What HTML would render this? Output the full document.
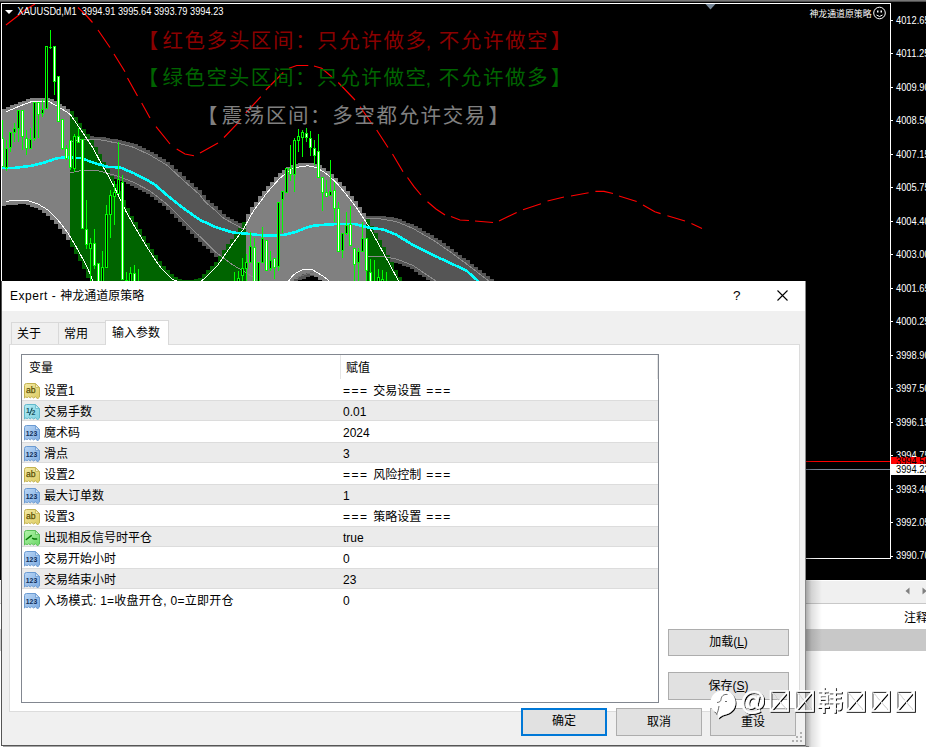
<!DOCTYPE html>
<html lang="zh-CN"><head><meta charset="utf-8"><title>Expert - 神龙通道原策略</title>
<style>
html,body{margin:0;padding:0}
body{width:926px;height:747px;position:relative;overflow:hidden;background:#fff;font-family:"Liberation Sans","Noto Sans CJK SC",sans-serif;font-size:12px;color:#000}
#chart{position:absolute;left:0;top:0;width:926px;height:580px;background:#000}
#chart svg{position:absolute;left:0;top:0}
.big{font-family:"Liberation Sans","Noto Sans CJK SC",sans-serif;font-weight:400}
#topstrip{position:absolute;left:0;top:0;width:926px;height:2px;background:linear-gradient(#8a8a8a,#3a3a3a)}
#below{position:absolute;left:0;top:580px;width:926px;height:167px;background:#fff}
#sb{position:absolute;left:0;top:1px;width:926px;height:22px;background:#f0f0f0;border-bottom:1px solid #c8c8c8}
#band{position:absolute;left:0;top:49px;width:926px;height:22px;background:#c8c8c8}
#dlgshadow{position:absolute;left:806px;top:287px;width:16px;height:460px;background:linear-gradient(90deg,rgba(0,0,0,.32),rgba(0,0,0,.12) 35%,rgba(0,0,0,0))}
#dlg{position:absolute;left:1px;top:281px;width:805px;height:465px;background:#f0f0f0;box-sizing:border-box;border-left:1px solid #555;border-bottom:1px solid #555;border-right:1px solid #8a8a8a}
#tbar{position:absolute;left:0;top:0;width:803px;height:30px;background:#fff}
#ttl{position:absolute;left:8px;top:7px;font-size:12px;line-height:16px;color:#000;white-space:nowrap}
.tab{position:absolute;box-sizing:border-box;border:1px solid #d9d9d9;border-bottom:none;background:#f0f0f0;text-align:left;padding-left:5px;line-height:20px;font-size:12px}
#pane{position:absolute;left:7px;top:63px;width:791px;height:368px;box-sizing:border-box;background:#fff;border:1px solid #dcdcdc}
#list{position:absolute;left:19px;top:73px;width:638px;height:349px;box-sizing:border-box;border:1px solid #828790;background:#fff;overflow:hidden}
#hdr{height:23px;position:relative;border-bottom:1px solid #fff}
#hdr span{position:absolute;top:5px;line-height:16px}
.row{height:21px;position:relative;box-sizing:border-box;border-top:1px solid #fff;border-bottom:1px solid #fff}
.row.alt{background:#ebebeb;border-top:1px solid #dcdcdc;border-bottom:1px solid #dcdcdc}
.row .ic{position:absolute;left:2px;top:3px}
.eq{letter-spacing:1.5px}
.ls{letter-spacing:.25px}
.row .nm{position:absolute;left:22px;top:3px;line-height:17px;white-space:nowrap}
.row .vl{position:absolute;left:321px;top:3px;line-height:17px;white-space:nowrap}
.btn{position:absolute;box-sizing:border-box;border:1px solid #adadad;background:#e1e1e1;text-align:center;font-size:12px}
#wm{position:absolute;left:0;top:0;width:926px;height:747px;pointer-events:none}
</style></head><body>
<div id="chart">
<svg width="926" height="580" viewBox="0 0 926 580">
<g shape-rendering="crispEdges">
<path fill="#555555" d="M66 140h4V177h-4zM70 138h4V176h-4zM74 137h4V175h-4zM78 136h4V174h-4zM82 136h4V173h-4zM86 136h4V173h-4zM90 136h4V174h-4zM94 137h4V174h-4zM98 137h4V175h-4zM102 137h4V176h-4zM106 138h4V177h-4zM110 139h4V178h-4zM114 139h4V179h-4zM118 140h4V181h-4zM122 141h4V182h-4zM126 142h4V184h-4zM130 143h4V186h-4zM134 144h4V188h-4zM138 146h4V190h-4zM142 148h4V192h-4zM146 150h4V194h-4zM150 152h4V197h-4zM154 154h4V200h-4zM158 157h4V203h-4zM162 159h4V206h-4zM166 162h4V210h-4zM170 165h4V214h-4zM174 169h4V218h-4zM178 172h4V222h-4zM182 176h4V226h-4zM186 180h4V230h-4zM190 183h4V234h-4zM194 187h4V238h-4zM198 190h4V242h-4zM202 195h4V246h-4zM206 200h4V249h-4zM210 203h4V253h-4zM214 206h4V257h-4zM218 210h4V260h-4zM222 214h4V263h-4zM226 217h4V266h-4zM230 219h4V269h-4zM234 221h4V271h-4zM238 223h4V273h-4zM242 225h4V276h-4zM246 225h4V278h-4zM250 224h4V281h-4zM254 223h4V283h-4zM258 222h4V285h-4zM262 221h4V286h-4zM266 220h4V286h-4zM270 219h4V286h-4zM274 218h4V286h-4zM278 217h4V286h-4zM282 216h4V285h-4zM286 215h4V284h-4zM290 214h4V283h-4zM294 213h4V282h-4zM298 212h4V280h-4zM302 212h4V279h-4zM306 211h4V277h-4zM310 211h4V276h-4zM314 211h4V275h-4zM318 210h4V273h-4zM322 210h4V272h-4zM326 210h4V270h-4zM330 209h4V269h-4zM334 209h4V267h-4zM338 209h4V266h-4zM342 210h4V265h-4zM346 211h4V264h-4zM350 212h4V263h-4zM354 213h4V262h-4zM358 214h4V261h-4zM362 215h4V260h-4zM366 216h4V259h-4zM370 216h4V259h-4zM374 216h4V259h-4zM378 216h4V260h-4zM382 216h4V260h-4zM386 217h4V261h-4zM390 217h4V262h-4zM394 218h4V263h-4zM398 219h4V264h-4zM402 221h4V266h-4zM406 223h4V267h-4zM410 224h4V269h-4zM414 226h4V272h-4zM418 228h4V275h-4zM422 231h4V277h-4zM426 233h4V280h-4zM430 235h4V283h-4zM434 238h4V286h-4zM438 240h4V289h-4zM442 243h4V292h-4zM446 246h4V296h-4zM450 249h4V299h-4zM454 252h4V303h-4zM458 255h4V306h-4zM462 258h4V310h-4zM466 260h4V313h-4zM470 264h4V313h-4zM474 267h4V313h-4zM478 270h4V313h-4zM482 273h4V313h-4zM486 276h4V313h-4zM490 279h4V313h-4zM494 282h4V313h-4z"/>
<path fill="#808080" d="M2 109h4V206h-4zM6 107h4V205h-4zM10 105h4V205h-4zM14 104h4V205h-4zM18 102h4V204h-4zM22 101h4V204h-4zM26 99h4V205h-4zM30 98h4V207h-4zM34 98h4V208h-4zM38 98h4V210h-4zM42 98h4V213h-4zM46 98h4V216h-4zM50 99h4V220h-4zM54 101h4V224h-4zM58 104h4V229h-4zM62 106h4V234h-4zM66 109h4V240h-4z"/>
<path fill="#006400" d="M70 111h4V247h-4zM74 117h4V254h-4zM78 123h4V261h-4zM82 129h4V269h-4zM86 134h4V278h-4zM90 140h4V287h-4zM94 147h4V296h-4zM98 154h4V302h-4zM102 162h4V310h-4zM106 169h4V316h-4zM110 176h4V324h-4zM114 184h4V330h-4zM118 191h4V336h-4zM122 200h4V339h-4zM126 208h4V343h-4zM130 216h4V346h-4zM134 222h4V350h-4zM138 229h4V353h-4zM142 236h4V357h-4zM146 243h4V360h-4zM150 249h4V364h-4zM154 255h4V367h-4zM158 261h4V371h-4zM162 266h4V374h-4zM166 270h4V378h-4zM170 274h4V381h-4zM174 277h4V385h-4zM178 279h4V388h-4zM182 280h4V392h-4zM186 280h4V395h-4zM190 280h4V399h-4zM194 279h4V402h-4zM198 278h4V403h-4zM202 274h4V402h-4zM206 270h4V398h-4zM210 266h4V394h-4zM214 262h4V390h-4zM218 256h4V386h-4zM222 250h4V382h-4zM226 244h4V378h-4zM230 239h4V374h-4zM234 234h4V370h-4zM238 228h4V366h-4zM242 222h4V362h-4z"/>
<path fill="#808080" d="M246 214h4V358h-4zM250 207h4V354h-4zM254 202h4V350h-4zM258 196h4V346h-4zM262 191h4V342h-4zM266 186h4V338h-4zM270 182h4V333h-4zM274 177h4V323h-4zM278 173h4V312h-4zM282 170h4V300h-4zM286 167h4V290h-4zM290 165h4V283h-4zM294 164h4V279h-4zM298 163h4V276h-4zM302 163h4V274h-4zM306 163h4V273h-4zM310 163h4V275h-4zM314 164h4V277h-4zM318 165h4V280h-4zM322 168h4V282h-4zM326 171h4V287h-4zM330 174h4V294h-4zM334 178h4V302h-4zM338 182h4V309h-4zM342 186h4V317h-4zM346 191h4V325h-4zM350 196h4V332h-4zM354 201h4V340h-4zM358 207h4V346h-4zM362 213h4V350h-4z"/>
<path fill="#006400" d="M366 219h4V354h-4zM370 226h4V358h-4zM374 233h4V362h-4zM378 240h4V366h-4zM382 247h4V370h-4zM386 255h4V374h-4zM390 262h4V378h-4zM394 270h4V382h-4zM398 277h4V386h-4zM402 285h4V390h-4zM406 292h4V394h-4z"/>
<polyline fill="none" stroke="#8c8c8c" stroke-width="1" points="70,142.5 72,142.0 74,141.4 76,140.9 78,140.3 80,139.8 82,139.3 84,139.0 86,139.1 88,139.2 90,139.3 92,139.4 94,139.5 96,139.6 98,139.7 100,139.8 102,140.2 104,140.6 106,140.9 108,141.3 110,141.7 112,142.1 114,142.5 116,142.9 118,143.3 120,143.8 122,144.3 124,144.8 126,145.3 128,145.8 130,146.3 132,146.8 134,147.5 136,148.4 138,149.4 140,150.3 142,151.2 144,152.2 146,153.1 148,154.1 150,155.0 152,156.2 154,157.4 156,158.6 158,159.8 160,161.0 162,162.2 164,163.4 166,164.6 168,166.2 170,168.0 172,169.9 174,171.7 176,173.6 178,175.4 180,177.2 182,179.1 184,180.9 186,182.6 188,184.4 190,186.2 192,187.9 194,189.7 196,191.5 198,193.2 200,195.2 202,197.7 204,200.4 206,202.6 208,204.3 210,206.0 212,207.7 214,209.4 216,211.1 218,213.0 220,215.0 222,217.0 224,218.5 226,219.6 228,220.8 230,221.8 232,222.9 234,224.1 236,225.1 238,226.2 240,227.3 242,228.4 244,228.8 246,228.5" />
<polyline fill="none" stroke="#8c8c8c" stroke-width="1" points="70,173.0 72,172.5 74,172.1 76,171.6 78,171.2 80,170.7 82,170.2 84,170.1 86,170.2 88,170.3 90,170.4 92,170.5 94,170.6 96,170.8 98,170.9 100,171.1 102,171.6 104,172.2 106,172.8 108,173.4 110,173.9 112,174.5 114,175.1 116,175.7 118,176.4 120,177.1 122,177.9 124,178.6 126,179.4 128,180.1 130,180.9 132,181.6 134,182.5 136,183.6 138,184.6 140,185.7 142,186.8 144,187.8 146,188.9 148,189.9 150,191.1 152,192.6 154,194.1 156,195.7 158,197.2 160,198.8 162,200.3 164,201.9 166,203.5 168,205.3 170,207.2 172,209.2 174,211.2 176,213.1 178,215.1 180,217.1 182,219.0 184,221.0 186,222.9 188,224.9 190,226.9 192,228.8 194,230.8 196,232.8 198,234.7 200,236.7 202,238.7 204,240.6 206,242.6 208,244.5 210,246.5 212,248.4 214,250.4 216,252.3 218,254.0 220,255.4 222,256.9 224,258.4 226,259.8 228,261.3 230,262.8 232,264.3 234,265.6 236,266.8 238,268.0 240,269.2 242,270.4 244,271.6 246,272.8 248,274.1 250,275.3 252,276.5 254,277.8 256,278.9 258,279.9 260,280.8 262,281.7" />
<polyline fill="none" stroke="#8c8c8c" stroke-width="1" points="366,218.9 368,219.0 370,218.9 372,218.9 374,218.8 376,218.8 378,218.7 380,218.8 382,219.1 384,219.4 386,219.8 388,220.1 390,220.5 392,220.9 394,221.2 396,221.6 398,222.2 400,223.1 402,223.9 404,224.7 406,225.6 408,226.4 410,227.2 412,228.1 414,229.1 416,230.2 418,231.4 420,232.5 422,233.7 424,234.8 426,236.0 428,237.1 430,238.3 432,239.4 434,240.7 436,242.1 438,243.4 440,244.8 442,246.2 444,247.6 446,248.9 448,250.3 450,251.7 452,253.2 454,254.6 456,256.1 458,257.6 460,259.1 462,260.5 464,262.0 466,263.5 468,265.0 470,266.6 472,268.1 474,269.7 476,271.2 478,272.8 480,274.4 482,275.9 484,277.4 486,278.8 488,280.3 490,281.8 492,283.5 494,285.2 496,286.8 498,288.4 500,290.0" />
<polyline fill="none" stroke="#8c8c8c" stroke-width="1" points="366,256.1 368,256.1 370,256.2 372,256.2 374,256.3 376,256.4 378,256.5 380,256.6 382,256.7 384,256.9 386,257.2 388,257.5 390,257.9 392,258.2 394,258.5 396,258.9 398,259.5 400,260.3 402,261.1 404,261.9 406,262.7 408,263.5 410,264.3 412,265.1 414,266.2 416,267.5 418,268.9 420,270.2 422,271.6 424,272.9 426,274.3 428,275.6 430,277.0 432,278.3 434,279.7 436,281.1 438,282.7 440,284.3 442,286.0 444,287.7 446,289.4 448,291.1 450,292.9" />
<polyline fill="none" stroke="#707070" stroke-width="1" points="296,277.9 298,277.2 300,276.5 302,275.8 304,275.1 306,274.4 308,273.7 310,273.0 312,272.3 314,271.6" />
<polyline fill="none" stroke="#ffffff" stroke-width="1" points="6,111.7 8,110.9 10,110.1 12,109.3 14,108.4 16,107.6 18,106.8 20,106.0 22,105.2 24,104.5 26,103.7 28,102.9 30,102.2 32,101.4 34,101.0 36,101.0 38,101.0 40,101.0 42,101.0 44,101.0 46,101.0 48,101.2 50,102.1 52,103.3 54,104.4 56,105.6 58,106.7 60,107.9 62,109.1 64,110.3 66,111.6 68,112.8 70,114.3 72,116.9 74,119.8 76,122.8 78,125.7 80,128.6 82,131.5 84,134.5 86,137.5 88,140.5 90,143.5 92,146.5 94,149.9 96,153.7 98,157.5 100,161.3 102,165.1 104,168.6 106,171.8 108,175.1 110,178.8 112,182.7 114,186.5 116,190.4 118,194.5 120,198.7 122,203.0 124,207.2 126,211.5 128,215.2 130,218.6 132,222.0 134,225.4 136,228.8 138,232.2 140,235.5 142,238.9 144,242.2 146,245.5 148,248.7 150,251.8 152,254.9 154,258.0 156,260.9 158,263.8 160,266.6 162,268.8 164,270.9 166,273.0 168,275.1 170,277.2 172,279.0 174,280.0 176,280.8 178,281.7 180,282.4 182,282.8 184,283.1 186,283.4 188,283.4 190,283.3 192,283.2 194,283.1 196,282.7 198,282.1 200,281.5 202,280.6 204,278.8 206,276.9 208,275.0 210,273.1 212,271.2 214,269.3 216,267.3 218,264.8 220,261.9 222,259.0 224,256.1 226,253.2 228,250.3 230,247.4 232,244.5 234,241.7 236,239.1 238,236.5 240,233.9 242,231.3 244,228.2 246,224.5 248,220.8 250,217.2 252,213.5 254,210.3 256,207.6 258,204.9 260,202.1 262,199.4 264,196.7 266,194.0 268,191.5 270,189.3 272,187.0 274,184.8 276,182.5 278,180.3 280,178.1 282,176.5 284,174.9 286,173.4 288,171.8 290,170.3 292,169.0 294,168.4 296,167.8 298,167.3 300,166.8 302,166.5 304,166.2 306,166.0 308,165.9 310,166.2 312,166.6 314,167.0 316,167.4 318,168.3 320,169.6 322,170.9 324,172.2 326,173.6 328,175.2 330,177.0 332,178.8 334,180.6 336,182.4 338,184.6 340,187.0 342,189.4 344,191.8 346,194.2 348,196.7 350,199.3 352,201.9 354,204.5 356,207.1 358,209.9 360,212.9 362,215.9 364,218.9 366,222.0 368,225.3 370,228.8 372,232.3 374,235.8 376,239.4 378,243.1 380,246.7 382,250.4 384,254.0 386,257.7 388,261.3 390,265.0 392,268.8 394,272.5 396,276.2 398,280.0 400,284.0 402,287.9 404,291.6 406,295.1 408,298.7 410,302.2" />
<polyline fill="none" stroke="#ffffff" stroke-width="1" points="6,201.3 8,201.1 10,200.9 12,200.8 14,200.6 16,200.4 18,200.3 20,200.4 22,200.4 24,200.4 26,200.5 28,200.6 30,201.2 32,201.9 34,202.6 36,203.3 38,204.1 40,205.2 42,206.4 44,207.6 46,208.8 48,210.1 50,212.0 52,214.0 54,216.0 56,218.0 58,220.1 60,222.6 62,225.2 64,227.8 66,230.4 68,233.1 70,236.4 72,239.8 74,243.2 76,246.6 78,250.1 80,253.7 82,257.4 84,261.1 86,264.8 88,269.1 90,273.9 92,278.6 94,283.3 96,287.8" />
<polyline fill="none" stroke="#ffffff" stroke-width="1" points="286,286.1 288,282.3 290,278.9 292,276.7 294,274.7 296,273.2 298,272.1 300,271.0 302,270.0 304,269.4 306,269.1 308,269.1 310,269.1 312,269.6 314,270.7 316,271.8 318,273.0 320,274.3 322,275.5 324,276.8 326,278.3 328,280.2 330,283.1 332,286.4 334,289.9" />
<polyline fill="none" stroke="#00ffff" stroke-width="2.6" points="2,168.0 4,168.0 6,168.0 8,168.0 10,168.0 12,168.0 14,167.9 16,167.6 18,167.4 20,167.2 22,166.9 24,166.7 26,166.5 28,166.2 30,166.0 32,165.5 34,165.1 36,164.6 38,164.2 40,163.7 42,163.2 44,162.7 46,162.0 48,161.3 50,160.7 52,160.0 54,159.3 56,158.7 58,158.1 60,157.9 62,157.7 64,157.6 66,157.5 68,157.6 70,157.6 72,157.7 74,157.8 76,157.8 78,157.9 80,157.9 82,158.1 84,158.9 86,159.8 88,160.8 90,161.6 92,162.3 94,162.9 96,163.5 98,164.1 100,164.6 102,165.2 104,165.8 106,166.4 108,166.8 110,166.9 112,167.0 114,167.1 116,167.3 118,167.4 120,167.6 122,168.3 124,169.1 126,169.9 128,170.8 130,171.6 132,172.4 134,173.3 136,174.3 138,175.4 140,176.4 142,177.4 144,178.5 146,179.5 148,180.6 150,181.8 152,182.9 154,184.1 156,185.7 158,187.5 160,189.2 162,190.9 164,192.7 166,194.4 168,196.0 170,197.6 172,199.2 174,200.8 176,202.4 178,204.0 180,205.6 182,207.2 184,208.7 186,210.1 188,211.5 190,212.9 192,214.4 194,215.8 196,217.2 198,218.6 200,219.9 202,220.9 204,221.8 206,222.7 208,223.6 210,224.5 212,225.4 214,226.3 216,227.2 218,227.9 220,228.5 222,229.1 224,229.7 226,230.4 228,231.0 230,231.6 232,232.2 234,232.6 236,232.8 238,232.9 240,233.1 242,233.3 244,233.5 246,233.6 248,233.8 250,234.0 252,234.2 254,234.4 256,234.6 258,234.9 260,235.1 262,235.3 264,235.5 266,235.7 268,235.7 270,235.6 272,235.5 274,235.4 276,235.3 278,235.2 280,235.1 282,235.0 284,234.8 286,234.3 288,233.8 290,233.3 292,232.8 294,232.4 296,231.8 298,231.1 300,230.3 302,229.4 304,228.5 306,227.9 308,227.3 310,226.7 312,226.1 314,225.7 316,225.5 318,225.3 320,225.1 322,224.9 324,224.8 326,224.6 328,224.4 330,224.4 332,224.3 334,224.2 336,224.1 338,224.0 340,223.9 342,223.8 344,223.8 346,223.9 348,223.9 350,223.9 352,223.9 354,224.0 356,224.3 358,224.8 360,225.3 362,225.9 364,226.4 366,227.0 368,227.5 370,227.8 372,228.0 374,228.3 376,228.6 378,228.8 380,229.1 382,229.4 384,229.9 386,230.7 388,231.5 390,232.3 392,233.1 394,233.9 396,234.7 398,235.8 400,237.0 402,238.3 404,239.5 406,240.7 408,241.9 410,243.2 412,244.4 414,245.5 416,246.5 418,247.5 420,248.5 422,249.4 424,250.4 426,251.4 428,252.4 430,253.4 432,254.4 434,255.4 436,256.4 438,257.3 440,258.3 442,259.2 444,260.1 446,261.1 448,262.0 450,263.0 452,263.9 454,264.8 456,265.8 458,266.7 460,267.7 462,268.6 464,269.5 466,270.5 468,272.0 470,273.8 472,275.6 474,277.4 476,279.2 478,281.0 480,283.0 482,285.0 484,286.7 486,287.0 488,287.0 490,287.0" stroke-linejoin="round"/>
<g shape-rendering="crispEdges"><path d="M2.5 120V167" stroke="#00ff00" stroke-width="1"/><rect x="1.5" y="138.5" width="2" height="28" fill="#ffffff" stroke="#00ff00" stroke-width="1"/><path d="M6.5 140V171" stroke="#00ff00" stroke-width="1"/><rect x="5.5" y="148.5" width="2" height="19" fill="#000000" stroke="#00ff00" stroke-width="1"/><path d="M10.5 132V152" stroke="#00ff00" stroke-width="1"/><rect x="9.5" y="132.5" width="2" height="15" fill="#000000" stroke="#00ff00" stroke-width="1"/><path d="M14.5 123V142" stroke="#00ff00" stroke-width="1"/><rect x="13.5" y="128.5" width="2" height="4" fill="#000000" stroke="#00ff00" stroke-width="1"/><path d="M18.5 110V142" stroke="#00ff00" stroke-width="1"/><rect x="17.5" y="110.5" width="2" height="18" fill="#000000" stroke="#00ff00" stroke-width="1"/><path d="M22.5 110V150" stroke="#00ff00" stroke-width="1"/><rect x="21.5" y="110.5" width="2" height="26" fill="#ffffff" stroke="#00ff00" stroke-width="1"/><path d="M26.5 130V155" stroke="#00ff00" stroke-width="1"/><rect x="25.5" y="138.5" width="2" height="10" fill="#ffffff" stroke="#00ff00" stroke-width="1"/><path d="M30.5 128V148" stroke="#00ff00" stroke-width="1"/><rect x="29.5" y="139.5" width="2" height="9" fill="#000000" stroke="#00ff00" stroke-width="1"/><path d="M34.5 102V141" stroke="#00ff00" stroke-width="1"/><rect x="33.5" y="102.5" width="2" height="36" fill="#000000" stroke="#00ff00" stroke-width="1"/><path d="M38.5 102V138" stroke="#00ff00" stroke-width="1"/><rect x="37.5" y="102.5" width="2" height="12" fill="#ffffff" stroke="#00ff00" stroke-width="1"/><path d="M42.5 99V117" stroke="#00ff00" stroke-width="1"/><rect x="41.5" y="109.5" width="2" height="4" fill="#000000" stroke="#00ff00" stroke-width="1"/><path d="M46.5 46V108" stroke="#00ff00" stroke-width="1"/><rect x="45.5" y="46.5" width="2" height="62" fill="#000000" stroke="#00ff00" stroke-width="1"/><path d="M50.5 30V49" stroke="#00ff00" stroke-width="1"/><path d="M49.0 47.5h3" stroke="#00ff00" stroke-width="1"/><path d="M54.5 46V95" stroke="#00ff00" stroke-width="1"/><rect x="53.5" y="46.5" width="2" height="35" fill="#ffffff" stroke="#00ff00" stroke-width="1"/><path d="M58.5 76V122" stroke="#00ff00" stroke-width="1"/><rect x="57.5" y="76.5" width="2" height="45" fill="#ffffff" stroke="#00ff00" stroke-width="1"/><path d="M62.5 119V150" stroke="#00ff00" stroke-width="1"/><rect x="61.5" y="119.5" width="2" height="29" fill="#ffffff" stroke="#00ff00" stroke-width="1"/><path d="M66.5 145V160" stroke="#00ff00" stroke-width="1"/><rect x="65.5" y="148.5" width="2" height="10" fill="#ffffff" stroke="#00ff00" stroke-width="1"/><path d="M70.5 140V170" stroke="#00ff00" stroke-width="1"/><rect x="69.5" y="140.5" width="2" height="27" fill="#ffffff" stroke="#00ff00" stroke-width="1"/><path d="M74.5 134V172" stroke="#00ff00" stroke-width="1"/><rect x="73.5" y="136.5" width="2" height="32" fill="#000000" stroke="#00ff00" stroke-width="1"/><path d="M78.5 128V142" stroke="#00ff00" stroke-width="1"/><rect x="77.5" y="136.5" width="2" height="6" fill="#ffffff" stroke="#00ff00" stroke-width="1"/><path d="M82.5 139V228" stroke="#00ff00" stroke-width="1"/><rect x="81.5" y="139.5" width="2" height="89" fill="#ffffff" stroke="#00ff00" stroke-width="1"/><path d="M86.5 200V249" stroke="#00ff00" stroke-width="1"/><rect x="85.5" y="229.5" width="2" height="15" fill="#ffffff" stroke="#00ff00" stroke-width="1"/><path d="M90.5 238V285" stroke="#00ff00" stroke-width="1"/><rect x="89.5" y="243.5" width="2" height="5" fill="#000000" stroke="#00ff00" stroke-width="1"/><path d="M94.5 229V269" stroke="#00ff00" stroke-width="1"/><rect x="93.5" y="243.5" width="2" height="22" fill="#ffffff" stroke="#00ff00" stroke-width="1"/><path d="M98.5 263V285" stroke="#00ff00" stroke-width="1"/><rect x="97.5" y="263.5" width="2" height="22" fill="#ffffff" stroke="#00ff00" stroke-width="1"/><path d="M102.5 251V285" stroke="#00ff00" stroke-width="1"/><rect x="101.5" y="267.5" width="2" height="18" fill="#000000" stroke="#00ff00" stroke-width="1"/><path d="M106.5 205V267" stroke="#00ff00" stroke-width="1"/><rect x="105.5" y="214.5" width="2" height="53" fill="#000000" stroke="#00ff00" stroke-width="1"/><path d="M110.5 190V238" stroke="#00ff00" stroke-width="1"/><rect x="109.5" y="195.5" width="2" height="19" fill="#000000" stroke="#00ff00" stroke-width="1"/><path d="M114.5 181V225" stroke="#00ff00" stroke-width="1"/><rect x="113.5" y="192.5" width="2" height="4" fill="#000000" stroke="#00ff00" stroke-width="1"/><path d="M118.5 142V193" stroke="#00ff00" stroke-width="1"/><rect x="117.5" y="179.5" width="2" height="14" fill="#000000" stroke="#00ff00" stroke-width="1"/><path d="M122.5 175V279" stroke="#00ff00" stroke-width="1"/><rect x="121.5" y="182.5" width="2" height="97" fill="#ffffff" stroke="#00ff00" stroke-width="1"/><path d="M126.5 272V285" stroke="#00ff00" stroke-width="1"/><path d="M125.0 280.5h3" stroke="#00ff00" stroke-width="1"/><path d="M130.5 267V285" stroke="#00ff00" stroke-width="1"/><rect x="129.5" y="273.5" width="2" height="12" fill="#000000" stroke="#00ff00" stroke-width="1"/><path d="M134.5 265V285" stroke="#00ff00" stroke-width="1"/><rect x="133.5" y="273.5" width="2" height="12" fill="#ffffff" stroke="#00ff00" stroke-width="1"/><path d="M138.5 269V285" stroke="#00ff00" stroke-width="1"/><path d="M234.5 272V285" stroke="#00ff00" stroke-width="1"/><path d="M238.5 271V285" stroke="#00ff00" stroke-width="1"/><rect x="237.5" y="278.5" width="2" height="7" fill="#000000" stroke="#00ff00" stroke-width="1"/><path d="M242.5 258V285" stroke="#00ff00" stroke-width="1"/><rect x="241.5" y="268.5" width="2" height="7" fill="#000000" stroke="#00ff00" stroke-width="1"/><path d="M246.5 254V285" stroke="#00ff00" stroke-width="1"/><rect x="245.5" y="262.5" width="2" height="6" fill="#000000" stroke="#00ff00" stroke-width="1"/><path d="M250.5 232V262" stroke="#00ff00" stroke-width="1"/><rect x="249.5" y="246.5" width="2" height="16" fill="#000000" stroke="#00ff00" stroke-width="1"/><path d="M254.5 238V285" stroke="#00ff00" stroke-width="1"/><rect x="253.5" y="247.5" width="2" height="38" fill="#ffffff" stroke="#00ff00" stroke-width="1"/><path d="M258.5 262V285" stroke="#00ff00" stroke-width="1"/><rect x="257.5" y="262.5" width="2" height="23" fill="#000000" stroke="#00ff00" stroke-width="1"/><path d="M262.5 227V262" stroke="#00ff00" stroke-width="1"/><rect x="261.5" y="238.5" width="2" height="24" fill="#000000" stroke="#00ff00" stroke-width="1"/><path d="M266.5 240V270" stroke="#00ff00" stroke-width="1"/><rect x="265.5" y="240.5" width="2" height="30" fill="#ffffff" stroke="#00ff00" stroke-width="1"/><path d="M270.5 251V271" stroke="#00ff00" stroke-width="1"/><rect x="269.5" y="260.5" width="2" height="8" fill="#000000" stroke="#00ff00" stroke-width="1"/><path d="M274.5 258V279" stroke="#00ff00" stroke-width="1"/><rect x="273.5" y="258.5" width="2" height="9" fill="#ffffff" stroke="#00ff00" stroke-width="1"/><path d="M278.5 202V271" stroke="#00ff00" stroke-width="1"/><rect x="277.5" y="202.5" width="2" height="64" fill="#000000" stroke="#00ff00" stroke-width="1"/><path d="M282.5 191V233" stroke="#00ff00" stroke-width="1"/><rect x="281.5" y="191.5" width="2" height="8" fill="#000000" stroke="#00ff00" stroke-width="1"/><path d="M286.5 168V192" stroke="#00ff00" stroke-width="1"/><rect x="285.5" y="168.5" width="2" height="24" fill="#000000" stroke="#00ff00" stroke-width="1"/><path d="M290.5 145V181" stroke="#00ff00" stroke-width="1"/><rect x="289.5" y="168.5" width="2" height="6" fill="#ffffff" stroke="#00ff00" stroke-width="1"/><path d="M294.5 138V192" stroke="#00ff00" stroke-width="1"/><rect x="293.5" y="140.5" width="2" height="34" fill="#000000" stroke="#00ff00" stroke-width="1"/><path d="M298.5 129V152" stroke="#00ff00" stroke-width="1"/><rect x="297.5" y="136.5" width="2" height="4" fill="#000000" stroke="#00ff00" stroke-width="1"/><path d="M302.5 130V157" stroke="#00ff00" stroke-width="1"/><rect x="301.5" y="132.5" width="2" height="5" fill="#000000" stroke="#00ff00" stroke-width="1"/><path d="M306.5 128V142" stroke="#00ff00" stroke-width="1"/><rect x="305.5" y="133.5" width="2" height="4" fill="#ffffff" stroke="#00ff00" stroke-width="1"/><path d="M310.5 131V156" stroke="#00ff00" stroke-width="1"/><rect x="309.5" y="138.5" width="2" height="9" fill="#ffffff" stroke="#00ff00" stroke-width="1"/><path d="M314.5 140V165" stroke="#00ff00" stroke-width="1"/><rect x="313.5" y="148.5" width="2" height="7" fill="#ffffff" stroke="#00ff00" stroke-width="1"/><path d="M318.5 134V177" stroke="#00ff00" stroke-width="1"/><rect x="317.5" y="151.5" width="2" height="26" fill="#ffffff" stroke="#00ff00" stroke-width="1"/><path d="M322.5 177V211" stroke="#00ff00" stroke-width="1"/><rect x="321.5" y="177.5" width="2" height="15" fill="#ffffff" stroke="#00ff00" stroke-width="1"/><path d="M326.5 180V196" stroke="#00ff00" stroke-width="1"/><rect x="325.5" y="192.5" width="2" height="4" fill="#ffffff" stroke="#00ff00" stroke-width="1"/><path d="M330.5 160V195" stroke="#00ff00" stroke-width="1"/><rect x="329.5" y="191.5" width="2" height="4" fill="#000000" stroke="#00ff00" stroke-width="1"/><path d="M334.5 182V222" stroke="#00ff00" stroke-width="1"/><rect x="333.5" y="190.5" width="2" height="18" fill="#ffffff" stroke="#00ff00" stroke-width="1"/><path d="M338.5 202V251" stroke="#00ff00" stroke-width="1"/><rect x="337.5" y="208.5" width="2" height="43" fill="#ffffff" stroke="#00ff00" stroke-width="1"/><path d="M342.5 233V258" stroke="#00ff00" stroke-width="1"/><rect x="341.5" y="233.5" width="2" height="17" fill="#000000" stroke="#00ff00" stroke-width="1"/><path d="M346.5 212V235" stroke="#00ff00" stroke-width="1"/><rect x="345.5" y="225.5" width="2" height="8" fill="#000000" stroke="#00ff00" stroke-width="1"/><path d="M350.5 206V245" stroke="#00ff00" stroke-width="1"/><rect x="349.5" y="224.5" width="2" height="21" fill="#ffffff" stroke="#00ff00" stroke-width="1"/><path d="M354.5 248V285" stroke="#00ff00" stroke-width="1"/><rect x="353.5" y="248.5" width="2" height="16" fill="#ffffff" stroke="#00ff00" stroke-width="1"/><path d="M358.5 248V285" stroke="#00ff00" stroke-width="1"/><rect x="357.5" y="251.5" width="2" height="11" fill="#000000" stroke="#00ff00" stroke-width="1"/><path d="M362.5 222V251" stroke="#00ff00" stroke-width="1"/><rect x="361.5" y="238.5" width="2" height="13" fill="#000000" stroke="#00ff00" stroke-width="1"/><path d="M366.5 238V285" stroke="#00ff00" stroke-width="1"/><rect x="365.5" y="238.5" width="2" height="32" fill="#ffffff" stroke="#00ff00" stroke-width="1"/><path d="M370.5 259V285" stroke="#00ff00" stroke-width="1"/><rect x="369.5" y="272.5" width="2" height="13" fill="#ffffff" stroke="#00ff00" stroke-width="1"/><path d="M374.5 260V285" stroke="#00ff00" stroke-width="1"/><path d="M378.5 269V285" stroke="#00ff00" stroke-width="1"/><rect x="377.5" y="277.5" width="2" height="8" fill="#000000" stroke="#00ff00" stroke-width="1"/><path d="M382.5 270V285" stroke="#00ff00" stroke-width="1"/><rect x="381.5" y="279.5" width="2" height="6" fill="#000000" stroke="#00ff00" stroke-width="1"/><path d="M386.5 272V285" stroke="#00ff00" stroke-width="1"/></g>
<path fill="none" stroke="#ff0000" stroke-width="1.15" shape-rendering="geometricPrecision" d="M6.0 25.0 L16.7 16.7 L25.0 10.0 L35.0 4.0M78.0 7.5 L85.0 14.0 L92.5 22.5M98.0 30.0 L110.0 47.5M114.0 54.0 L125.0 71.7M127.5 78.0 L137.5 96.0M141.7 103.0 L150.0 118.0M156.0 126.7 L170.0 144.0M176.7 149.0 L185.0 154.0 L194.0 155.8M200.0 153.0 L218.0 143.0M224.0 137.5 L238.0 123.0 L240.0 120.0M245.8 113.0 L260.8 96.7M265.8 90.0 L283.3 72.5M289.0 68.3 L296.7 65.5 L308.3 65.5M314.0 66.0 L321.7 68.3 L331.7 76.7M338.3 82.5 L355.0 100.0M360.0 106.7 L372.5 124.5M376.7 130.0 L388.0 147.5M392.5 154.0 L403.0 171.7M407.5 177.5 L414.0 186.7 L421.0 195.0M427.5 201.7 L436.0 209.0 L445.0 215.0M451.0 216.5 L460.0 220.0 L469.0 220.5M475.0 221.0 L493.0 222.5M499.0 221.0 L516.7 212.5M523.0 209.7 L541.0 203.8M547.5 201.0 L564.0 197.0M571.0 196.0 L588.6 192.8M595.4 191.4 L604.0 191.4 L613.0 193.5M619.0 196.0 L636.7 201.5M643.0 205.0 L654.8 211.8 L660.6 213.6M667.4 215.7 L685.0 221.0M691.4 223.5 L702.0 228.4"/>
</g>
<g shape-rendering="crispEdges" stroke="#fff" stroke-width="1" fill="none">
<path d="M1.5 3V580M1 3.5H891M890.5 3V559M1 558.5H891"/>
</g>
<path d="M806 461.5H890" stroke="#ff0000" stroke-width="1" shape-rendering="crispEdges"/>
<path d="M806 469.5H890" stroke="#778899" stroke-width="1" shape-rendering="crispEdges"/>
<g fill="#fff" font-size="10.6" font-family="'Liberation Sans',sans-serif"><path d="M891 20.5h2" stroke="#fff" stroke-width="1"/><text x="896" y="23.9" textLength="33.6" lengthAdjust="spacingAndGlyphs">4012.65</text><path d="M891 53.5h2" stroke="#fff" stroke-width="1"/><text x="896" y="57.4" textLength="33.6" lengthAdjust="spacingAndGlyphs">4011.25</text><path d="M891 87.5h2" stroke="#fff" stroke-width="1"/><text x="896" y="90.8" textLength="33.6" lengthAdjust="spacingAndGlyphs">4009.90</text><path d="M891 120.5h2" stroke="#fff" stroke-width="1"/><text x="896" y="124.3" textLength="33.6" lengthAdjust="spacingAndGlyphs">4008.50</text><path d="M891 154.5h2" stroke="#fff" stroke-width="1"/><text x="896" y="157.8" textLength="33.6" lengthAdjust="spacingAndGlyphs">4007.15</text><path d="M891 187.5h2" stroke="#fff" stroke-width="1"/><text x="896" y="191.2" textLength="33.6" lengthAdjust="spacingAndGlyphs">4005.75</text><path d="M891 221.5h2" stroke="#fff" stroke-width="1"/><text x="896" y="224.7" textLength="33.6" lengthAdjust="spacingAndGlyphs">4004.40</text><path d="M891 254.5h2" stroke="#fff" stroke-width="1"/><text x="896" y="258.2" textLength="33.6" lengthAdjust="spacingAndGlyphs">4003.00</text><path d="M891 288.5h2" stroke="#fff" stroke-width="1"/><text x="896" y="291.7" textLength="33.6" lengthAdjust="spacingAndGlyphs">4001.65</text><path d="M891 321.5h2" stroke="#fff" stroke-width="1"/><text x="896" y="325.1" textLength="33.6" lengthAdjust="spacingAndGlyphs">4000.25</text><path d="M891 355.5h2" stroke="#fff" stroke-width="1"/><text x="896" y="358.6" textLength="33.6" lengthAdjust="spacingAndGlyphs">3998.90</text><path d="M891 388.5h2" stroke="#fff" stroke-width="1"/><text x="896" y="392.1" textLength="33.6" lengthAdjust="spacingAndGlyphs">3997.50</text><path d="M891 422.5h2" stroke="#fff" stroke-width="1"/><text x="896" y="425.5" textLength="33.6" lengthAdjust="spacingAndGlyphs">3996.15</text><path d="M891 455.5h2" stroke="#fff" stroke-width="1"/><text x="896" y="459.0" textLength="33.6" lengthAdjust="spacingAndGlyphs">3994.75</text><path d="M891 489.5h2" stroke="#fff" stroke-width="1"/><text x="896" y="492.5" textLength="33.6" lengthAdjust="spacingAndGlyphs">3993.40</text><path d="M891 522.5h2" stroke="#fff" stroke-width="1"/><text x="896" y="525.9" textLength="33.6" lengthAdjust="spacingAndGlyphs">3992.05</text><path d="M891 556.5h2" stroke="#fff" stroke-width="1"/><text x="896" y="559.4" textLength="33.6" lengthAdjust="spacingAndGlyphs">3990.70</text></g>
<rect x="891" y="457" width="35" height="8" fill="#ff0000"/>
<text x="896" y="465.2" font-size="10.6" fill="#000" font-family="'Liberation Sans',sans-serif" textLength="33.6" lengthAdjust="spacingAndGlyphs">3994.50</text>
<rect x="891" y="464" width="35" height="11" fill="#ffffff"/>
<text x="896" y="473.2" font-size="10.6" fill="#000" font-family="'Liberation Sans',sans-serif" textLength="33.6" lengthAdjust="spacingAndGlyphs">3994.23</text>
<path d="M5 10h8l-4 4z" fill="#fff"/>
<path d="M705.500 4h10l-5 5.500z" fill="#778899"/>
<text x="17.5" y="15" font-size="10.4" fill="#fff" font-family="'Liberation Sans',sans-serif" textLength="206" lengthAdjust="spacingAndGlyphs" xml:space="preserve">XAUUSDd,M1  3994.91 3995.64 3993.79 3994.23</text>
<text x="809.5" y="16.5" font-size="9" fill="#fff" font-family="'Liberation Sans','Noto Sans CJK SC',sans-serif" textLength="62" lengthAdjust="spacingAndGlyphs">神龙通道原策略</text>
<g fill="none" stroke="#fff" stroke-width="1"><circle cx="879.5" cy="13" r="5.8"/><path d="M876.5 15q3 3 6 0"/></g>
<rect x="877" y="10.5" width="1.5" height="2" fill="#fff"/><rect x="880.5" y="10.5" width="1.5" height="2" fill="#fff"/>
<g class="big" font-size="20.5" font-weight="400"><text x="137.8 162.4 184.5 206.6 228.7 250.8 272.9 295.0 317.1 339.2 361.3 383.4 405.5 425.6 438.7 460.8 482.9 505.0 527.1 550.7" y="47.9" fill="#8b0000">【红色多头区间：只允许做多,不允许做空】</text><text x="137.8 162.4 184.5 206.6 228.7 250.8 272.9 295.0 317.1 339.2 361.3 383.4 405.5 425.6 438.7 460.8 482.9 505.0 527.1 550.7" y="85.2" fill="#006400">【绿色空头区间：只允许做空,不允许做多】</text><text x="197.1 221.7 243.8 265.9 288.0 310.1 332.2 354.3 376.4 398.5 420.6 442.7 464.8 488.4" y="122.7" fill="#808080">【震荡区间：多空都允许交易】</text></g>
</svg>
</div>
<div id="topstrip"></div>
<div id="below"><div id="sb"></div><div id="band"></div>
<svg width="926" height="167" style="position:absolute;left:0;top:0"><path d="M909.500 7.500l-4 3.500 4 3.500z" fill="#808080"/><path d="M922.500 7.500l4 3.500-4 3.500z" fill="#808080"/>
<text x="904" y="42" font-size="12" font-family="'Liberation Sans','Noto Sans CJK SC',sans-serif" fill="#000">注释</text></svg>
</div>
<div id="dlgshadow"></div><div style="position:absolute;left:3px;top:746px;width:806px;height:1px;background:rgba(0,0,0,.35)"></div>
<div id="dlg">
<div id="tbar"><div id="ttl"><span style="letter-spacing:.55px">Expert - </span>神龙通道原策略</div>
<svg width="803" height="30" style="position:absolute;left:0;top:0"><text x="731" y="18.5" font-size="13.5" font-family="'Liberation Sans',sans-serif" fill="#000">?</text><path d="M775.5 9.5l10 10M785.5 9.5l-10 10" stroke="#000" stroke-width="1.1" fill="none"/></svg>
</div>
<div id="pane"></div>
<div class="tab" style="left:9px;top:41px;width:48px;height:22px;line-height:22px">关于</div>
<div class="tab" style="left:56px;top:41px;width:48px;height:22px;line-height:22px">常用</div>
<div class="tab" style="left:103px;top:39px;width:64px;height:25px;background:#fff;line-height:25px;padding-left:6px">输入参数</div>
<div id="list">
<div id="hdr"><span style="left:7px">变量</span><span style="left:324px">赋值</span><div style="position:absolute;left:318px;top:0;width:1px;height:24px;background:#e5e5e5"></div><div style="position:absolute;left:635px;top:0;width:1px;height:24px;background:#e5e5e5"></div></div>
<div class="row"><svg class="ic" width="16" height="16" viewBox="0 0 16 16"><defs><linearGradient id="gab" x1="0" y1="0" x2="1" y2="1"><stop offset="0" stop-color="#f4eaa6"/><stop offset="1" stop-color="#dccb62"/></linearGradient></defs><path d="M.5 15.200V2.500Q.5 .5 2.500 .5H11.500L15.500 4.500V14L13.600 15.900 11.500 13.700 9.600 15 7.800 13.600 6.200 14.900 4.600 13.600 3.200 15 1.800 13.600z" fill="url(#gab)" stroke="#c2b250" stroke-width="1" stroke-linejoin="round"/><path d="M11.500 .8V4.500H15.200z" fill="#ffffff" fill-opacity=".55" stroke="#c2b250" stroke-width=".8" stroke-linejoin="round"/><text x="1.900" y="10.400" font-size="9.500" fill="#5a5005" font-family="'Liberation Sans',sans-serif" textLength="9.600" lengthAdjust="spacingAndGlyphs" stroke="#5a5005" stroke-width=".25">ab</text></svg><span class="nm">设置1</span><span class="vl"><span class="eq">=== </span>交易设置<span class="eq"> ===</span></span></div>
<div class="row alt"><svg class="ic" width="16" height="16" viewBox="0 0 16 16"><defs><linearGradient id="gfr" x1="0" y1="0" x2="1" y2="1"><stop offset="0" stop-color="#b4ebf3"/><stop offset="1" stop-color="#7fd0e0"/></linearGradient></defs><path d="M.5 15.200V2.500Q.5 .5 2.500 .5H11.500L15.500 4.500V14L13.600 15.900 11.500 13.700 9.600 15 7.800 13.600 6.200 14.900 4.600 13.600 3.200 15 1.800 13.600z" fill="url(#gfr)" stroke="#62b9cc" stroke-width="1" stroke-linejoin="round"/><path d="M11.500 .8V4.500H15.200z" fill="#ffffff" fill-opacity=".55" stroke="#62b9cc" stroke-width=".8" stroke-linejoin="round"/><text x="2" y="9" font-size="7" font-weight="bold" fill="#15525f" font-family="'Liberation Sans',sans-serif">1</text><path d="M5.300 11.200L8.300 3.800" stroke="#15525f" stroke-width="1.100" fill="none"/><text x="7.600" y="11.300" font-size="7" font-weight="bold" fill="#15525f" font-family="'Liberation Sans',sans-serif">2</text></svg><span class="nm">交易手数</span><span class="vl">0.01</span></div>
<div class="row"><svg class="ic" width="16" height="16" viewBox="0 0 16 16"><defs><linearGradient id="gin" x1="0" y1="0" x2="1" y2="1"><stop offset="0" stop-color="#b9d6f6"/><stop offset="1" stop-color="#7eabe0"/></linearGradient></defs><path d="M.5 15.200V2.500Q.5 .5 2.500 .5H11.500L15.500 4.500V14L13.600 15.900 11.500 13.700 9.600 15 7.800 13.600 6.200 14.900 4.600 13.600 3.200 15 1.800 13.600z" fill="url(#gin)" stroke="#6b9bd2" stroke-width="1" stroke-linejoin="round"/><path d="M11.500 .8V4.500H15.200z" fill="#ffffff" fill-opacity=".55" stroke="#6b9bd2" stroke-width=".8" stroke-linejoin="round"/><text x="1.800" y="10.800" font-size="7.600" font-weight="bold" fill="#0f2d58" font-family="'Liberation Sans',sans-serif" textLength="11.400" lengthAdjust="spacingAndGlyphs">123</text></svg><span class="nm">魔术码</span><span class="vl">2024</span></div>
<div class="row alt"><svg class="ic" width="16" height="16" viewBox="0 0 16 16"><defs><linearGradient id="gin" x1="0" y1="0" x2="1" y2="1"><stop offset="0" stop-color="#b9d6f6"/><stop offset="1" stop-color="#7eabe0"/></linearGradient></defs><path d="M.5 15.200V2.500Q.5 .5 2.500 .5H11.500L15.500 4.500V14L13.600 15.900 11.500 13.700 9.600 15 7.800 13.600 6.200 14.900 4.600 13.600 3.200 15 1.800 13.600z" fill="url(#gin)" stroke="#6b9bd2" stroke-width="1" stroke-linejoin="round"/><path d="M11.500 .8V4.500H15.200z" fill="#ffffff" fill-opacity=".55" stroke="#6b9bd2" stroke-width=".8" stroke-linejoin="round"/><text x="1.800" y="10.800" font-size="7.600" font-weight="bold" fill="#0f2d58" font-family="'Liberation Sans',sans-serif" textLength="11.400" lengthAdjust="spacingAndGlyphs">123</text></svg><span class="nm">滑点</span><span class="vl">3</span></div>
<div class="row"><svg class="ic" width="16" height="16" viewBox="0 0 16 16"><defs><linearGradient id="gab" x1="0" y1="0" x2="1" y2="1"><stop offset="0" stop-color="#f4eaa6"/><stop offset="1" stop-color="#dccb62"/></linearGradient></defs><path d="M.5 15.200V2.500Q.5 .5 2.500 .5H11.500L15.500 4.500V14L13.600 15.900 11.500 13.700 9.600 15 7.800 13.600 6.200 14.900 4.600 13.600 3.200 15 1.800 13.600z" fill="url(#gab)" stroke="#c2b250" stroke-width="1" stroke-linejoin="round"/><path d="M11.500 .8V4.500H15.200z" fill="#ffffff" fill-opacity=".55" stroke="#c2b250" stroke-width=".8" stroke-linejoin="round"/><text x="1.900" y="10.400" font-size="9.500" fill="#5a5005" font-family="'Liberation Sans',sans-serif" textLength="9.600" lengthAdjust="spacingAndGlyphs" stroke="#5a5005" stroke-width=".25">ab</text></svg><span class="nm">设置2</span><span class="vl"><span class="eq">=== </span>风险控制<span class="eq"> ===</span></span></div>
<div class="row alt"><svg class="ic" width="16" height="16" viewBox="0 0 16 16"><defs><linearGradient id="gin" x1="0" y1="0" x2="1" y2="1"><stop offset="0" stop-color="#b9d6f6"/><stop offset="1" stop-color="#7eabe0"/></linearGradient></defs><path d="M.5 15.200V2.500Q.5 .5 2.500 .5H11.500L15.500 4.500V14L13.600 15.900 11.500 13.700 9.600 15 7.800 13.600 6.200 14.900 4.600 13.600 3.200 15 1.800 13.600z" fill="url(#gin)" stroke="#6b9bd2" stroke-width="1" stroke-linejoin="round"/><path d="M11.500 .8V4.500H15.200z" fill="#ffffff" fill-opacity=".55" stroke="#6b9bd2" stroke-width=".8" stroke-linejoin="round"/><text x="1.800" y="10.800" font-size="7.600" font-weight="bold" fill="#0f2d58" font-family="'Liberation Sans',sans-serif" textLength="11.400" lengthAdjust="spacingAndGlyphs">123</text></svg><span class="nm">最大订单数</span><span class="vl">1</span></div>
<div class="row"><svg class="ic" width="16" height="16" viewBox="0 0 16 16"><defs><linearGradient id="gab" x1="0" y1="0" x2="1" y2="1"><stop offset="0" stop-color="#f4eaa6"/><stop offset="1" stop-color="#dccb62"/></linearGradient></defs><path d="M.5 15.200V2.500Q.5 .5 2.500 .5H11.500L15.500 4.500V14L13.600 15.900 11.500 13.700 9.600 15 7.800 13.600 6.200 14.900 4.600 13.600 3.200 15 1.800 13.600z" fill="url(#gab)" stroke="#c2b250" stroke-width="1" stroke-linejoin="round"/><path d="M11.500 .8V4.500H15.200z" fill="#ffffff" fill-opacity=".55" stroke="#c2b250" stroke-width=".8" stroke-linejoin="round"/><text x="1.900" y="10.400" font-size="9.500" fill="#5a5005" font-family="'Liberation Sans',sans-serif" textLength="9.600" lengthAdjust="spacingAndGlyphs" stroke="#5a5005" stroke-width=".25">ab</text></svg><span class="nm">设置3</span><span class="vl"><span class="eq">=== </span>策略设置<span class="eq"> ===</span></span></div>
<div class="row alt"><svg class="ic" width="16" height="16" viewBox="0 0 16 16"><defs><linearGradient id="gbo" x1="0" y1="0" x2="1" y2="1"><stop offset="0" stop-color="#b4f4ac"/><stop offset="1" stop-color="#6bd666"/></linearGradient></defs><path d="M.5 15.200V2.500Q.5 .5 2.500 .5H11.500L15.500 4.500V14L13.600 15.900 11.500 13.700 9.600 15 7.800 13.600 6.200 14.900 4.600 13.600 3.200 15 1.800 13.600z" fill="url(#gbo)" stroke="#5abf58" stroke-width="1" stroke-linejoin="round"/><path d="M11.500 .8V4.500H15.200z" fill="#ffffff" fill-opacity=".55" stroke="#5abf58" stroke-width=".8" stroke-linejoin="round"/><path d="M2.300 9.500L7.300 5.600M8.600 8.300Q10.500 9.300 12.600 9" fill="none" stroke="#0a7a0a" stroke-width="1.500" stroke-linecap="round"/></svg><span class="nm">出现相反信号时平仓</span><span class="vl">true</span></div>
<div class="row"><svg class="ic" width="16" height="16" viewBox="0 0 16 16"><defs><linearGradient id="gin" x1="0" y1="0" x2="1" y2="1"><stop offset="0" stop-color="#b9d6f6"/><stop offset="1" stop-color="#7eabe0"/></linearGradient></defs><path d="M.5 15.200V2.500Q.5 .5 2.500 .5H11.500L15.500 4.500V14L13.600 15.900 11.500 13.700 9.600 15 7.800 13.600 6.200 14.900 4.600 13.600 3.200 15 1.800 13.600z" fill="url(#gin)" stroke="#6b9bd2" stroke-width="1" stroke-linejoin="round"/><path d="M11.500 .8V4.500H15.200z" fill="#ffffff" fill-opacity=".55" stroke="#6b9bd2" stroke-width=".8" stroke-linejoin="round"/><text x="1.800" y="10.800" font-size="7.600" font-weight="bold" fill="#0f2d58" font-family="'Liberation Sans',sans-serif" textLength="11.400" lengthAdjust="spacingAndGlyphs">123</text></svg><span class="nm">交易开始小时</span><span class="vl">0</span></div>
<div class="row alt"><svg class="ic" width="16" height="16" viewBox="0 0 16 16"><defs><linearGradient id="gin" x1="0" y1="0" x2="1" y2="1"><stop offset="0" stop-color="#b9d6f6"/><stop offset="1" stop-color="#7eabe0"/></linearGradient></defs><path d="M.5 15.200V2.500Q.5 .5 2.500 .5H11.500L15.500 4.500V14L13.600 15.900 11.500 13.700 9.600 15 7.800 13.600 6.200 14.900 4.600 13.600 3.200 15 1.800 13.600z" fill="url(#gin)" stroke="#6b9bd2" stroke-width="1" stroke-linejoin="round"/><path d="M11.500 .8V4.500H15.200z" fill="#ffffff" fill-opacity=".55" stroke="#6b9bd2" stroke-width=".8" stroke-linejoin="round"/><text x="1.800" y="10.800" font-size="7.600" font-weight="bold" fill="#0f2d58" font-family="'Liberation Sans',sans-serif" textLength="11.400" lengthAdjust="spacingAndGlyphs">123</text></svg><span class="nm">交易结束小时</span><span class="vl">23</span></div>
<div class="row"><svg class="ic" width="16" height="16" viewBox="0 0 16 16"><defs><linearGradient id="gin" x1="0" y1="0" x2="1" y2="1"><stop offset="0" stop-color="#b9d6f6"/><stop offset="1" stop-color="#7eabe0"/></linearGradient></defs><path d="M.5 15.200V2.500Q.5 .5 2.500 .5H11.500L15.500 4.500V14L13.600 15.900 11.500 13.700 9.600 15 7.800 13.600 6.200 14.900 4.600 13.600 3.200 15 1.800 13.600z" fill="url(#gin)" stroke="#6b9bd2" stroke-width="1" stroke-linejoin="round"/><path d="M11.500 .8V4.500H15.200z" fill="#ffffff" fill-opacity=".55" stroke="#6b9bd2" stroke-width=".8" stroke-linejoin="round"/><text x="1.800" y="10.800" font-size="7.600" font-weight="bold" fill="#0f2d58" font-family="'Liberation Sans',sans-serif" textLength="11.400" lengthAdjust="spacingAndGlyphs">123</text></svg><span class="nm ls">入场模式: 1=收盘开仓, 0=立即开仓</span><span class="vl">0</span></div>
<div style="height:1px;background:#dcdcdc;margin-top:-1px"></div>
</div>
<div class="btn" style="left:666px;top:348px;width:121px;height:27px;line-height:25px">加载(<u>L</u>)</div>
<div class="btn" style="left:666px;top:391px;width:121px;height:28px;line-height:26px">保存(<u>S</u>)</div>
<div class="btn" style="left:519px;top:427px;width:86px;height:28px;line-height:22px;border:2px solid #0078d7">确定</div>
<div class="btn" style="left:614px;top:427px;width:86px;height:28px;line-height:26px">取消</div>
<div class="btn" style="left:708px;top:427px;width:86px;height:28px;line-height:26px">重设</div>
<svg width="12" height="12" style="position:absolute;left:790px;top:451px"><g fill="#b0b0b0"><rect x="8" y="0" width="2" height="2"/><rect x="4" y="4" width="2" height="2"/><rect x="8" y="4" width="2" height="2"/><rect x="0" y="8" width="2" height="2"/><rect x="4" y="8" width="2" height="2"/><rect x="8" y="8" width="2" height="2"/></g></svg>
</div>
<svg id="wm" viewBox="0 0 926 747">
<defs><filter id="sh" x="-10%" y="-10%" width="130%" height="130%"><feDropShadow dx="1" dy="1" stdDeviation="0.4" flood-color="#000" flood-opacity="1"/></filter></defs>
<g filter="url(#sh)">
<path d="M723 690.500c7.500 0 12.500 5.500 12.500 12 0 7-5 11-11.500 12.500-2.500.6-4 2-6 3.500 .5-2 .6-3.500-1-4.500-4-2.500-6.500-6.500-6.500-11.500 0-6.500 5-12 12.500-12z" fill="#fff"/>
<text x="740" y="709.8" font-size="25.5" fill="#fff" stroke="#fff" stroke-width=".7" font-family="'Liberation Sans','Noto Sans CJK SC',sans-serif">@</text>
<text x="817" y="709.8" font-size="26" fill="#fff" stroke="#fff" stroke-width=".4" font-family="'Liberation Sans','Noto Sans CJK SC',sans-serif">韩</text>
<path fill="none" stroke="#fff" stroke-width="1.7" d="M770.5 691h17.5v20h-17.500zM771.5 710l15.500-18M795.5 691h17.5v20h-17.500zM796.5 710l15.500-18M846.5 691h17.5v20h-17.500zM847.5 710l15.500-18M871.5 691h17.5v20h-17.500zM872.5 710l15.500-18M896.5 691h17.5v20h-17.500zM897.5 710l15.500-18"/>
<path fill="none" stroke="#fff" stroke-width=".7" d="M772.0 692.500l14.500 17M797.0 692.500l14.500 17M848.0 692.500l14.500 17M873.0 692.500l14.500 17M898.0 692.500l14.500 17"/>
</g>
<path d="M727.500 694.500c-4-.5-6 1.500-6.500 5-.3 2-1.500 2.800-4 3M719 706c-.5 3-1 6-2.500 8.500M714.500 712l2 1.200M725 701.500h2" fill="none" stroke="#444" stroke-width=".8"/>
</svg>
</body></html>
